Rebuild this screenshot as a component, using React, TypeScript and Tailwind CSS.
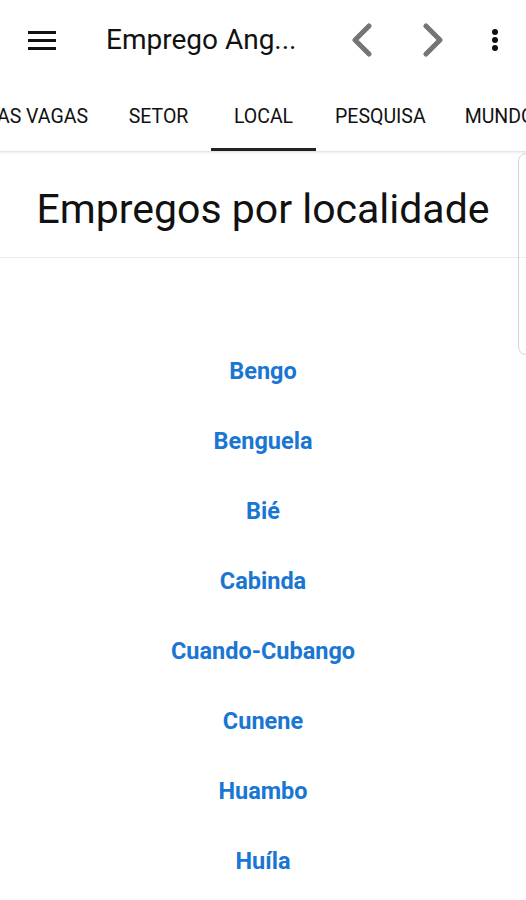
import React from "react";

const places = ["Bengo", "Benguela", "Bié", "Cabinda", "Cuando-Cubango", "Cunene", "Huambo", "Huíla"];

export default function App() {
  return (
    <div className="relative w-[526px] h-[900px] overflow-hidden bg-white" style={{ fontFamily: "Roboto, 'Noto Sans', sans-serif" }}>
      {/* Top bar */}
      <div className="flex items-center h-[80px]">
        <div className="w-[82px] flex justify-center pl-[1px]">
          <svg width="28" height="20" viewBox="0 0 28 20">
            <rect x="0" y="1" width="28" height="3" fill="#111" />
            <rect x="0" y="9" width="28" height="3" fill="#111" />
            <rect x="0" y="17" width="28" height="3" fill="#111" />
          </svg>
        </div>
        <div className="ml-[24px] w-[230px] text-[28px] text-[#111] whitespace-nowrap">Emprego Ang...</div>
        <div className="ml-[6px] w-[40px] flex justify-center">
          <svg width="24" height="34" viewBox="0 0 24 34">
            <path d="M19 3 L5 17 L19 31" stroke="#757575" strokeWidth="5" fill="none" strokeLinecap="round" strokeLinejoin="round" />
          </svg>
        </div>
        <div className="ml-[31px] w-[40px] flex justify-center">
          <svg width="24" height="34" viewBox="0 0 24 34">
            <path d="M5 3 L19 17 L5 31" stroke="#757575" strokeWidth="5" fill="none" strokeLinecap="round" strokeLinejoin="round" />
          </svg>
        </div>
        <div className="ml-[34px] w-[16px] flex justify-center">
          <svg width="8" height="22" viewBox="0 0 8 22">
            <circle cx="4" cy="3" r="3" fill="#111" />
            <circle cx="4" cy="11" r="3" fill="#111" />
            <circle cx="4" cy="19" r="3" fill="#111" />
          </svg>
        </div>
      </div>

      {/* Tabs */}
      <div className="flex h-[72px] text-[19.5px] text-[#111] whitespace-nowrap border-b border-[#e6e6e6] shadow-[0_1px_2px_rgba(0,0,0,0.08)]">
        <div className="w-[106px] shrink-0 flex justify-end items-center pr-[18px] pt-[3px]">NOVAS VAGAS</div>
        <div className="w-[105px] shrink-0 flex justify-center items-center pt-[3px]">SETOR</div>
        <div className="relative w-[105px] shrink-0 flex justify-center items-center pt-[3px]">
          LOCAL
          <div className="absolute left-0 right-0 bottom-0 h-[3px] bg-[#222]" />
        </div>
        <div className="shrink-0 flex justify-center items-center px-[19px] min-w-[105px] pt-[3px]">PESQUISA</div>
        <div className="shrink-0 flex items-center pl-[20px] pt-[3px]">MUNDO</div>
      </div>

      {/* Title */}
      <div className="h-[106px] flex items-center justify-center border-b border-[#ececec]">
        <h1 className="text-[41px] text-[#111] mt-[10px]">Empregos por localidade</h1>
      </div>

      {/* Right card edge */}
      <div className="absolute left-[518px] top-[153px] w-[20px] h-[202px] rounded-[8px] border border-[#d4d4d4]" />

      {/* List */}
      <div className="flex flex-col items-center pt-[79px]">
        {places.map((p) => (
          <a key={p} className="h-[70px] flex items-center text-[23.5px] font-bold text-[#1976d2] leading-none">
            {p}
          </a>
        ))}
      </div>
    </div>
  );
}
